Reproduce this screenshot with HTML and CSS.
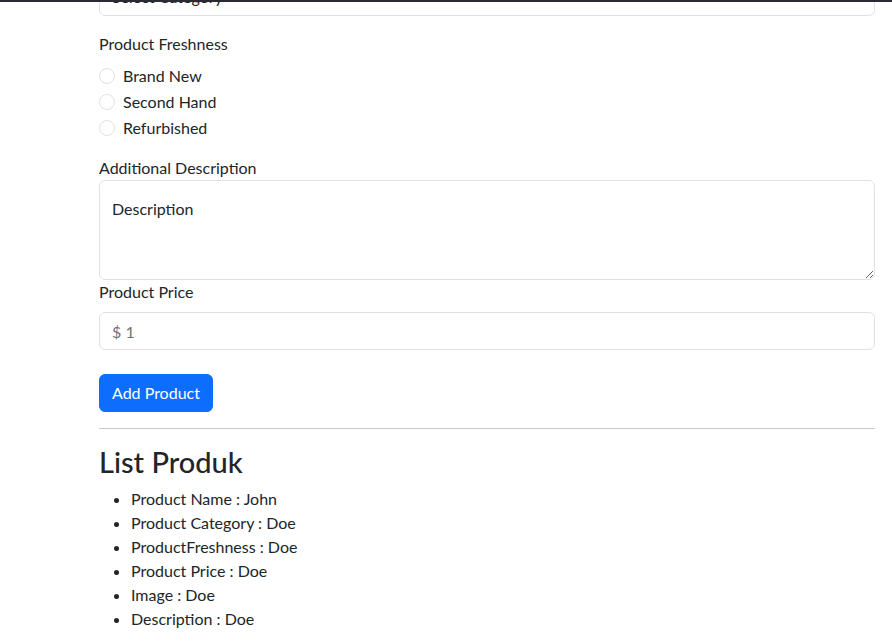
FILE: index.html
```html
<!DOCTYPE html>
<html lang="en">
<head>
<meta charset="utf-8">
<title>Create Product</title>
<link rel="stylesheet" href="styles.css">
</head>
<body>
<div class="topbar"></div>
<main class="container">
  <form class="product-form">
    <div class="field">
      <select class="form-select">
        <option>Select Category</option>
      </select>
    </div>

    <div class="field field-radios">
      <label class="form-label">Product Freshness</label>
      <div class="form-check">
        <input class="form-check-input" type="radio" name="fresh" id="f1">
        <label class="form-check-label" for="f1">Brand New</label>
      </div>
      <div class="form-check">
        <input class="form-check-input" type="radio" name="fresh" id="f2">
        <label class="form-check-label" for="f2">Second Hand</label>
      </div>
      <div class="form-check">
        <input class="form-check-input" type="radio" name="fresh" id="f3">
        <label class="form-check-label" for="f3">Refurbished</label>
      </div>
    </div>

    <div class="field-tight">
      <label class="form-label-flush" for="desc">Additional Description</label>
      <textarea class="form-control textarea" id="desc">Description</textarea>
    </div>

    <div class="field">
      <label class="form-label" for="price">Product Price</label>
      <input class="form-control" id="price" type="text" placeholder="$ 1">
    </div>

    <button type="button" class="btn-primary">Add Product</button>
  </form>

  <hr class="divider">

  <h2 class="list-title">List Produk</h2>
  <ul class="product-list">
    <li>Product Name : John</li>
    <li>Product Category : Doe</li>
    <li>ProductFreshness : Doe</li>
    <li>Product Price : Doe</li>
    <li>Image : Doe</li>
    <li>Description : Doe</li>
  </ul>
</main>
</body>
</html>
```

FILE: styles.css
```css
* { box-sizing: border-box; }

html, body {
  margin: 0;
  padding: 0;
  background: #fff;
}

body {
  font-family: "Lato", "Noto Sans", sans-serif;
  font-size: 16px;
  line-height: 1.5;
  color: #212529;
  overflow: hidden;
}

.topbar {
  position: fixed;
  top: 0;
  left: 0;
  right: 0;
  height: 2px;
  background: #2c2a33;
  z-index: 10;
}

.container {
  width: 776px;
  margin-left: 99px;
  margin-top: -22px;
}

.product-form {
  display: flex;
  flex-direction: column;
}

.field {
  margin-bottom: 16px;
}

.field-radios {
  margin-bottom: 14px;
}

.form-label {
  display: block;
  margin-bottom: 8px;
}

.form-label-flush {
  display: block;
  margin-bottom: 0;
}

.form-select,
.form-control {
  display: block;
  width: 100%;
  height: 38px;
  padding: 6px 12px;
  font: inherit;
  color: #212529;
  background: #fff;
  border: 1px solid #dee2e6;
  border-radius: 6px;
  appearance: none;
  -webkit-appearance: none;
  outline: none;
}

.form-control::placeholder {
  color: #6c757d;
  opacity: 1;
}

.textarea {
  height: 100px;
  padding: 16px 12px;
  resize: vertical;
}

.form-check {
  display: flex;
  align-items: center;
  min-height: 24px;
  margin-bottom: 2px;
}

.form-check-input {
  width: 16px;
  height: 16px;
  margin: 0 8px 0 0;
  border: 1px solid #dee2e6;
  border-radius: 50%;
  appearance: none;
  -webkit-appearance: none;
  background: #fff;
}

.btn-primary {
  align-self: flex-start;
  height: 38px;
  padding: 6px 12px;
  font: inherit;
  color: #fff;
  background: #0d6efd;
  border: 1px solid #0d6efd;
  border-radius: 6px;
  margin-top: 8px;
}

.divider {
  margin: 16px 0;
  border: 0;
  border-top: 1px solid #c8c9ca;
}

.list-title {
  margin: 0 0 7px;
  font-size: 29px;
  font-weight: 500;
  line-height: 1.2;
}

.product-list {
  margin: 0;
  padding-left: 32px;
}
```
